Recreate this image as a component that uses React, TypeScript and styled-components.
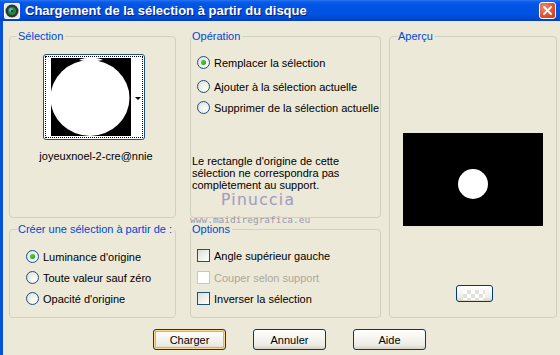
import React from "react";
import styled, { createGlobalStyle, css } from "styled-components";

const Global = createGlobalStyle`
  html, body { margin: 0; padding: 0; background: #ECE9D8; }
  body { width: 560px; height: 355px; overflow: hidden; font-family: "Liberation Sans", Arial, sans-serif; font-size: 11px; color: #000; }
`;

const Window = styled.div`
  width: 560px;
  height: 355px;
  display: flex;
  flex-direction: column;
  background: #ECE9D8;
`;

const TitleBar = styled.div`
  height: 21px;
  flex: none;
  display: flex;
  align-items: center;
  padding: 0 3px 0 4px;
  background: linear-gradient(#2A73F0 0, #0A5CEA 2px, #0055E5 5px, #0052E0 14px, #0049D2 18px, #003FBA 21px);
  color: #fff;
  box-sizing: border-box;
`;

const TitleText = styled.div`
  margin-left: 5px;
  font-family: "Liberation Sans", Arial, sans-serif;
  font-weight: bold;
  font-size: 13px;
  text-shadow: 1px 1px 0 #0A1E80;
  flex: 1;
  white-space: nowrap;
`;

const CloseBtn = styled.div`
  width: 17px;
  height: 17px;
  box-sizing: border-box;
  border: 1px solid #fff;
  border-radius: 3px;
  background: radial-gradient(circle at 30% 30%, #F0896A, #E0502A 60%, #C43A16);
  display: flex;
  align-items: center;
  justify-content: center;
  margin-right: 1px;
`;

const Body = styled.div`
  flex: 1;
  position: relative;
  border-left: 3px solid #0751D9;
  padding: 15px 0 0 6px;
  display: flex;
  flex-direction: column;
`;

const Grid = styled.div`
  display: grid;
  grid-template-columns: 167px 14px 191px 8px 168px;
  grid-template-rows: 182px 89px;
  row-gap: 11px;
`;

const Group = styled.div<{ $col: number; $row: string }>`
  grid-column: ${(p) => p.$col};
  grid-row: ${(p) => p.$row};
  position: relative;
  border: 1px solid #D0D0BF;
  border-radius: 4px;
  display: flex;
  flex-direction: column;
`;

const Legend = styled.span<{ $left: number }>`
  position: absolute;
  top: -7px;
  left: ${(p) => p.$left}px;
  padding: 0 2px 0 1px;
  background: #ECE9D8;
  color: #0046D5;
  line-height: 13px;
  white-space: nowrap;
`;

const SelectionBody = styled.div`
  display: flex;
  flex-direction: column;
  align-items: center;
  padding: 17px 0 0 2px;
`;

const Thumb = styled.div`
  width: 102px;
  height: 86px;
  box-sizing: border-box;
  border: 1px solid #1C5180;
  border-radius: 3px;
  padding: 1px;
  background: #fff;
`;

const ThumbInner = styled.div`
  height: 100%;
  box-sizing: border-box;
  border: 1px dotted #000;
  display: flex;
  padding: 1px 0 3px 5px;
  position: relative;
`;

const Arrow = styled.div`
  position: absolute;
  right: 1px;
  top: 40px;
  width: 0;
  height: 0;
  border-left: 3px solid transparent;
  border-right: 3px solid transparent;
  border-top: 3px solid #000;
`;

const Caption = styled.div`
  margin-top: 10px;
  line-height: 13px;
  margin-left: 5px;
`;

const OptionList = styled.div<{ $pt: number; $pl: number }>`
  display: flex;
  flex-direction: column;
  padding: ${(p) => p.$pt}px 0 0 ${(p) => p.$pl}px;
`;

const Row = styled.div<{ $mb?: number; $disabled?: boolean }>`
  height: 21px;
  display: flex;
  align-items: center;
  gap: 4px;
  margin-bottom: ${(p) => p.$mb ?? 0}px;
  color: ${(p) => (p.$disabled ? "#ACA899" : "#000")};
  white-space: nowrap;
`;

const Radio = styled.span<{ $checked?: boolean }>`
  width: 13px;
  height: 13px;
  box-sizing: border-box;
  border-radius: 50%;
  border: 1px solid #1C5180;
  background: radial-gradient(circle at 65% 65%, #FFFFFF 0, #F4F4F0 30%, #DCDCD4 100%);
  display: flex;
  align-items: center;
  justify-content: center;
  flex: none;
  ${(p) =>
    p.$checked &&
    css`
      &::after {
        content: "";
        width: 5px;
        height: 5px;
        border-radius: 50%;
        background: radial-gradient(circle at 40% 40%, #55D455, #21A121 70%, #1A8A1A);
      }
    `}
`;

const Check = styled.span<{ $disabled?: boolean }>`
  width: 13px;
  height: 13px;
  box-sizing: border-box;
  border: 1px solid ${(p) => (p.$disabled ? "#CAC8BB" : "#1C5180")};
  background: ${(p) =>
    p.$disabled ? "#fff" : "linear-gradient(135deg, #DCDCD7 0, #F0F0EA 50%, #FFFFFF 100%)"};
  flex: none;
`;

const Note = styled.div`
  margin: 37px 0 0 1px;
  line-height: 12px;
  width: 185px;
`;

const PreviewBody = styled.div`
  display: flex;
  flex-direction: column;
  align-items: center;
  padding-top: 96px;
`;

const PreviewBox = styled.div`
  width: 140px;
  height: 93px;
  background: #000;
  display: flex;
`;

const SmallBtn = styled.div`
  margin-top: 59px;
  margin-left: 2px;
  width: 37px;
  height: 17px;
  box-sizing: border-box;
  border: 1px solid #003C74;
  border-radius: 3px;
  background: linear-gradient(#FFFFFF, #F0F0EA 70%, #D8D4C8);
  display: flex;
  align-items: flex-end;
  justify-content: center;
  padding-bottom: 1px;
`;

const Checker = styled.div`
  width: 22px;
  height: 10px;
  background-image: linear-gradient(45deg, #E2E2DC 25%, transparent 25%, transparent 75%, #E2E2DC 75%),
    linear-gradient(45deg, #E2E2DC 25%, transparent 25%, transparent 75%, #E2E2DC 75%);
  background-size: 8px 8px;
  background-position: 0 0, 4px 4px;
  background-color: #fff;
`;

const ButtonRow = styled.div`
  display: flex;
  gap: 27px;
  margin: 11px 0 0 144px;
`;

const Button = styled.button<{ $default?: boolean }>`
  width: 73px;
  height: 21px;
  box-sizing: border-box;
  border: 1px solid #003C74;
  border-radius: 3px;
  background: linear-gradient(#FFFFFF 0, #F6F5F0 40%, #ECEBE4 80%, #D6D0C5 100%);
  font-family: "Liberation Sans", Arial, sans-serif;
  font-size: 11px;
  color: #000;
  padding: 0;
  ${(p) =>
    p.$default &&
    css`
      box-shadow: inset 0 0 0 1px #FFD78C, inset 0 0 0 2px #F3AE3C;
    `}
`;

const Watermark = styled.div`
  position: absolute;
  left: 184px;
  top: 171px;
  display: flex;
  flex-direction: column;
  align-items: flex-start;
  pointer-events: none;
`;

const WmName = styled.div`
  margin-left: 34px;
  font-family: "DejaVu Sans", sans-serif;
  font-size: 15.5px;
  letter-spacing: 1.3px;
  color: #A39DBF;
  text-shadow: 0 0 1px #D8D4E4;
  line-height: 16px;
`;

const WmUrl = styled.div`
  margin: 6px 0 0 3px;
  font-family: "DejaVu Sans Mono", monospace;
  font-size: 9.5px;
  color: #9C98AA;
  line-height: 12px;
`;

const AppIcon = () => (
  <svg width="16" height="16" viewBox="0 0 16 16">
    <rect x="0.5" y="0.5" width="15" height="15" rx="1" fill="#E8E8E8" stroke="#fff" />
    <circle cx="8" cy="8" r="6.5" fill="#333" />
    <circle cx="8" cy="8" r="4" fill="#1E8A3A" />
    <circle cx="7" cy="7" r="2" fill="#4AC0E8" />
    <circle cx="8" cy="8" r="1" fill="#111" />
  </svg>
);

const CloseX = () => (
  <svg width="9" height="9" viewBox="0 0 9 9">
    <path d="M1 1 L8 8 M8 1 L1 8" stroke="#fff" strokeWidth="1.8" strokeLinecap="square" />
  </svg>
);

const ThumbImage = () => (
  <svg width="80" height="78" viewBox="0 0 80 78" style={{ flex: "none" }}>
    <defs>
      <clipPath id="thumbClip">
        <rect width="80" height="78" />
      </clipPath>
    </defs>
    <rect width="80" height="78" fill="#000" />
    <g clipPath="url(#thumbClip)">
      <ellipse cx="39" cy="40" rx="39.5" ry="38" fill="#fff" />
      <path d="M28 2 C34 -1 46 -1 52 2 L40 4 Z" fill="#fff" />
    </g>
  </svg>
);

const PreviewImage = () => (
  <svg width="140" height="93" viewBox="0 0 140 93">
    <rect width="140" height="93" fill="#000" />
    <circle cx="70" cy="51" r="15" fill="#fff" />
  </svg>
);

export default function App() {
  return (
    <Window>
      <Global />
      <TitleBar>
        <AppIcon />
        <TitleText>Chargement de la sélection à partir du disque</TitleText>
        <CloseBtn>
          <CloseX />
        </CloseBtn>
      </TitleBar>
      <Body>
        <Grid>
          <Group $col={1} $row="1">
            <Legend $left={7}>Sélection</Legend>
            <SelectionBody>
              <Thumb>
                <ThumbInner>
                  <ThumbImage />
                  <Arrow />
                </ThumbInner>
              </Thumb>
              <Caption>joyeuxnoel-2-cre@nnie</Caption>
            </SelectionBody>
          </Group>

          <Group $col={3} $row="1">
            <Legend $left={0}>Opération</Legend>
            <OptionList $pt={15} $pl={6}>
              <Row $mb={3}>
                <Radio $checked />
                Remplacer la sélection
              </Row>
              <Row>
                <Radio />
                Ajouter à la sélection actuelle
              </Row>
              <Row>
                <Radio />
                Supprimer de la sélection actuelle
              </Row>
            </OptionList>
            <Note>
              Le rectangle d'origine de cette
              <br />
              sélection ne correspondra pas
              <br />
              complètement au support.
            </Note>
          </Group>

          <Group $col={5} $row="1 / span 2">
            <Legend $left={7}>Aperçu</Legend>
            <PreviewBody>
              <PreviewBox>
                <PreviewImage />
              </PreviewBox>
              <SmallBtn>
                <Checker />
              </SmallBtn>
            </PreviewBody>
          </Group>

          <Group $col={1} $row="2">
            <Legend $left={7}>Créer une sélection à partir de :</Legend>
            <OptionList $pt={16} $pl={16}>
              <Row>
                <Radio $checked />
                Luminance d'origine
              </Row>
              <Row>
                <Radio />
                Toute valeur sauf zéro
              </Row>
              <Row>
                <Radio />
                Opacité d'origine
              </Row>
            </OptionList>
          </Group>

          <Group $col={3} $row="2">
            <Legend $left={0}>Options</Legend>
            <OptionList $pt={15} $pl={6}>
              <Row $mb={1}>
                <Check />
                Angle supérieur gauche
              </Row>
              <Row $disabled>
                <Check $disabled />
                Couper selon support
              </Row>
              <Row>
                <Check />
                Inverser la sélection
              </Row>
            </OptionList>
          </Group>
        </Grid>
        <ButtonRow>
          <Button $default>Charger</Button>
          <Button>Annuler</Button>
          <Button>Aide</Button>
        </ButtonRow>
        <Watermark>
          <WmName>Pinuccia</WmName>
          <WmUrl>www.maidiregrafica.eu</WmUrl>
        </Watermark>
      </Body>
    </Window>
  );
}
